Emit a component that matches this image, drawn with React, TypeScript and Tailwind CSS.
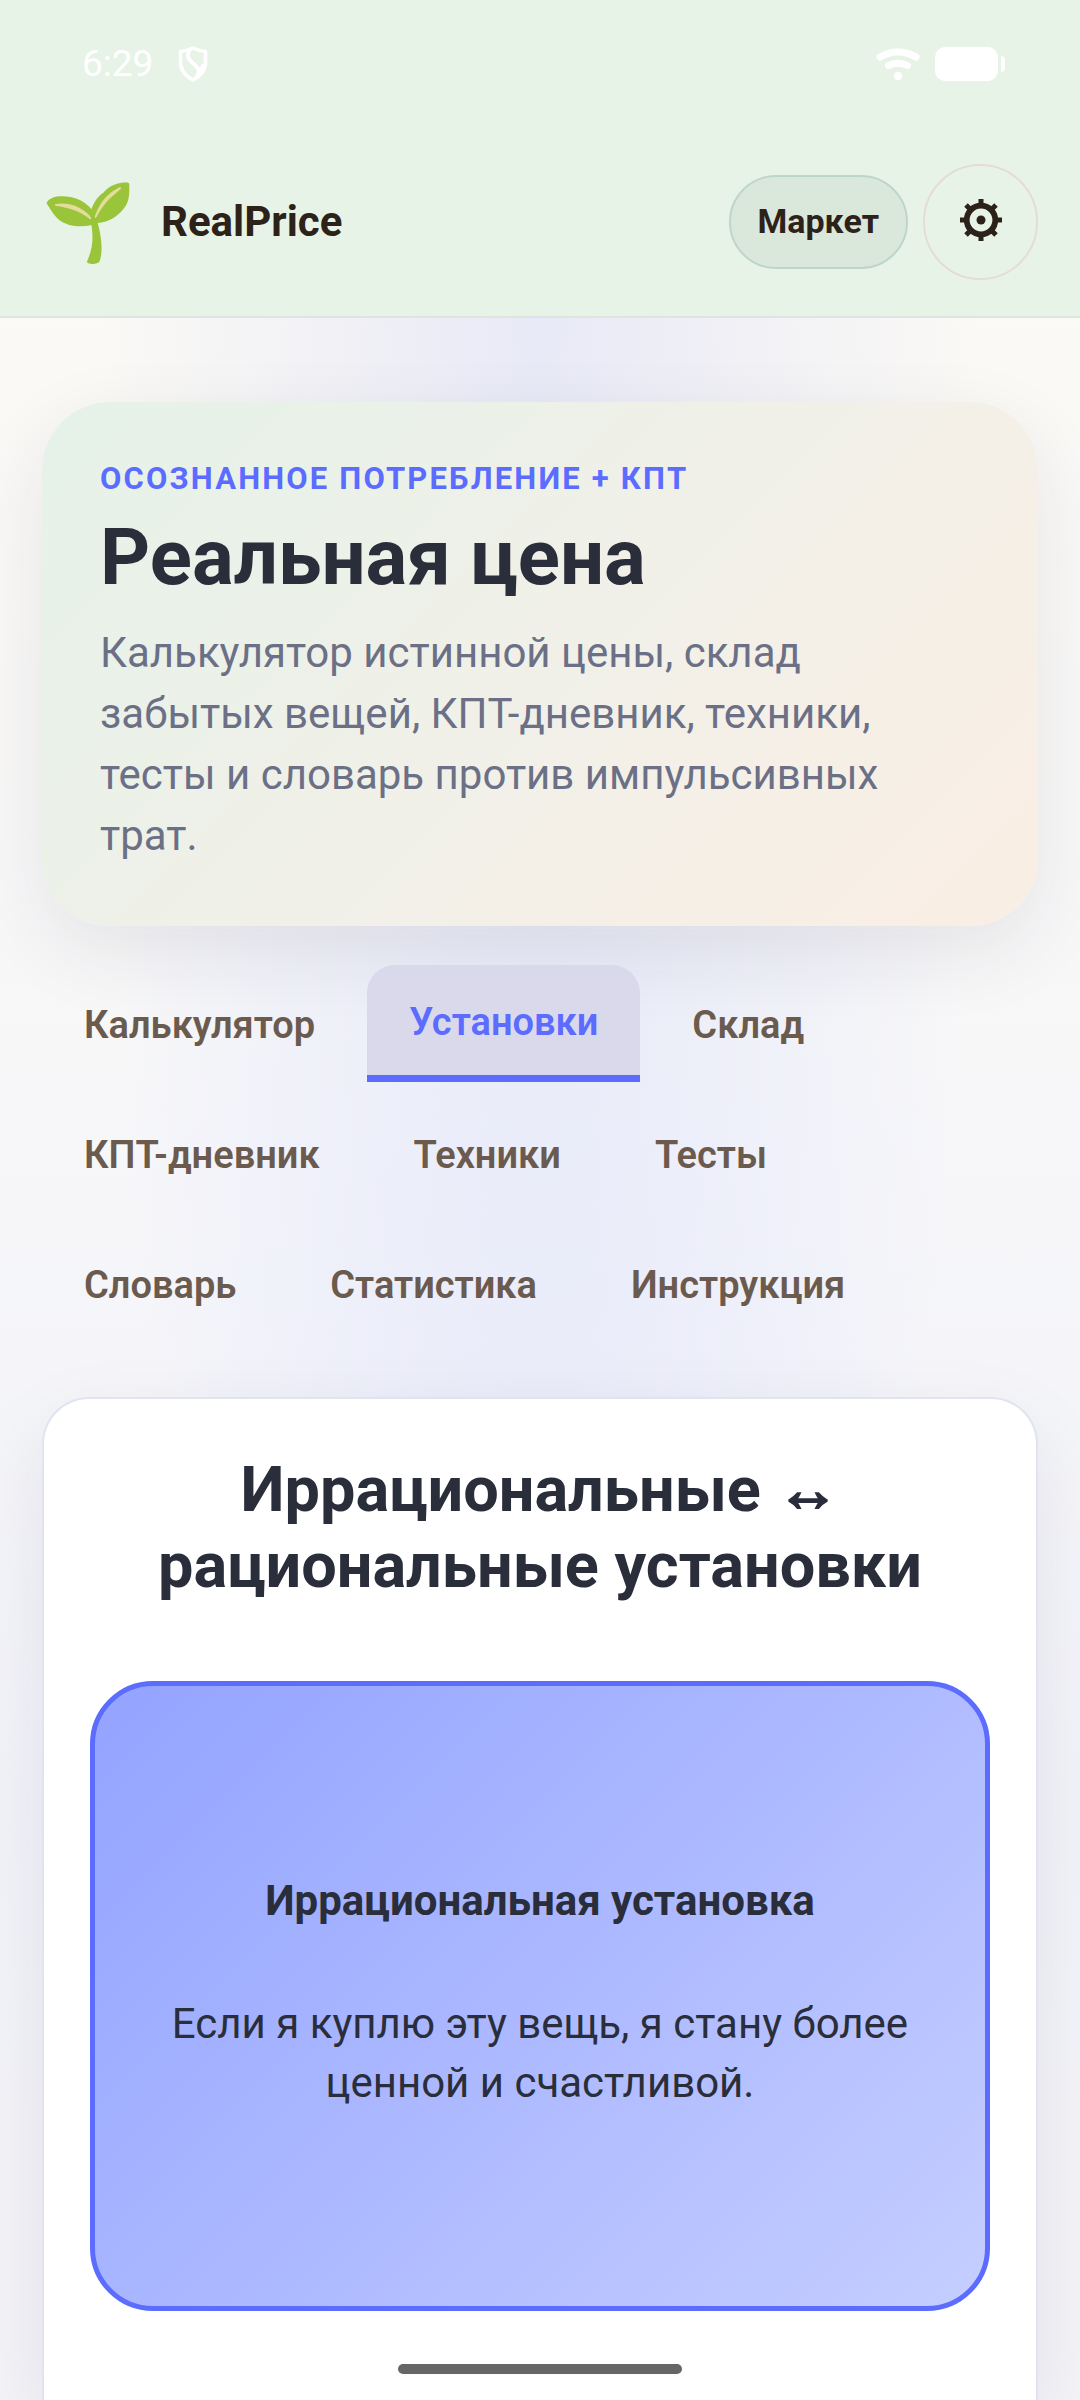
import React, { useState } from "react";

const tabs = [
  "Калькулятор",
  "Установки",
  "Склад",
  "КПТ-дневник",
  "Техники",
  "Тесты",
  "Словарь",
  "Статистика",
  "Инструкция",
];

const ShieldIcon = () => (
  <svg className="w-[30px] h-[36px]" viewBox="0 0 30 36" fill="none" stroke="currentColor" strokeWidth={3.6} strokeLinejoin="round" strokeLinecap="round">
    <path d="M15 2 C11 4 7 5 2.500 5.500 V16 C2.500 24 7.500 30 15 34 C22.500 30 27.500 24 27.500 16 V5.500 C23 5 19 4 15 2 Z" />
    <path d="M11.500 4 C8.500 9 9.500 12.500 14 16.500 C21 22 23 25 18.500 31" strokeWidth={4} />
    <path d="M25 19 L20.500 28.500" strokeWidth={3} />
  </svg>
);

const WifiIcon = () => (
  <svg className="w-[44px] h-[34px]" viewBox="0 0 44 34" fill="none" stroke="currentColor" strokeLinecap="round" strokeWidth={7}>
    <path d="M4 10 C15 3.200 29 3.200 40 10" />
    <path d="M12.500 18.500 C18 15.500 26 15.500 31.500 18.500" />
    <circle cx={22} cy={29} r={4.200} fill="currentColor" stroke="none" />
  </svg>
);

const BatteryIcon = () => (
  <svg className="w-[70px] h-[34px]" viewBox="0 0 70 34" fill="currentColor">
    <rect width={63} height={34} rx={10} />
    <path d="M66 9 C69 9.500 70 11 70 13 V21 C70 23 69 24.500 66 25 Z" />
  </svg>
);

const SproutIcon = () => (
  <svg className="w-[90px] h-[86px]" viewBox="0 -2 90 86">
    <g fill="#9ac53b">
      <path d="M1.500 22 C4 17 10 15.300 17 15.300 C31 15.300 41 21 46.300 28.300 C49 21 53 15 58.300 11.700 C65 4 73 1.500 81 1.500 C83.500 1.500 84.300 2 84.300 4 C84.500 15 84 22 78 28.500 C71 37 63 41 52.800 42 L47.300 44 C33 47 20 45 12 37 C8 33 4 26 1.500 22 Z" />
      <path d="M46.300 43 C48.500 56 48 67 42 80.500 C41.500 83.500 53 84 54.500 80.500 C58 72 57 57 52.500 41 Z" />
    </g>
    <g fill="#e3dc9a">
      <path d="M10 23.300 C23 20.500 38 26 46 36.500 C46.500 38 45.500 38.500 44.500 37.800 C33 29 23 26.500 11 25 C9.500 24.600 9.400 23.700 10 23.300 Z" />
      <path d="M74.500 6.300 C76 5.800 76.600 6.800 75.800 8 C64 18 59 22 51.500 36 C50.500 37.500 49.400 37 49.800 35.500 C54 23 62 12 74.500 6.300 Z" />
    </g>
  </svg>
);

const GearIcon = () => (
  <svg className="w-[42px] h-[46px]" viewBox="-21 -21 42 46" fill="none" stroke="currentColor" strokeWidth={5}>
    <circle r={14.300} strokeWidth={5.800} />
    <path d="M0 -21 V-15 M0 21 V15 M-21 0 H-15 M21 0 H15" />
    <path d="M-15 -15 L-11 -11 M15 -15 L11 -11 M-15 15 L-11 11 M15 15 L11 11" />
    <circle r={4.500} fill="currentColor" stroke="none" />
  </svg>
);

const App: React.FC = () => {
  const [activeTab, setActiveTab] = useState("Установки");
  const [flipped, setFlipped] = useState(false);

  return (
    <div className="min-h-screen flex flex-col font-[Roboto,sans-serif] text-[#2a2d3a] bg-[radial-gradient(ellipse_440px_2600px_at_50%_10%,rgba(91,118,255,0.12),rgba(91,118,255,0)),linear-gradient(180deg,#fdfaf4_0%,#f7f7f9_46%,#f2f3f9_75%,#f4f3f8_100%)]">
      {/* Header with status bar */}
      <header className="bg-[#e8f3e7] border-b-2 border-[#dce5e2]">
        <div className="h-[128px] pl-[82px] pr-[75px] flex items-center justify-between text-white">
          <div className="flex items-center gap-[25px]">
            <span className="text-[37px] leading-[42px]">6:29</span>
            <ShieldIcon />
          </div>
          <div className="flex items-center gap-[15px]">
            <WifiIcon />
            <BatteryIcon />
          </div>
        </div>
        <div className="h-[188px] px-[42px] flex items-center justify-between text-[#2d2219]">
          <div className="flex items-center gap-[26px] pl-[3px]">
            <SproutIcon />
            <span className="text-[42px] leading-[50px] font-bold">RealPrice</span>
          </div>
          <div className="flex items-center gap-[15px]">
            <button className="h-[94px] px-[27px] pb-[2px] rounded-full border-2 border-[#bdd6c8] bg-[#dae8dc] text-[34px] leading-[42px] font-bold">
              Маркет
            </button>
            <button aria-label="Настройки" className="w-[115px] h-[116px] rounded-full border-2 border-[#e4dcd6] flex items-center justify-center">
              <GearIcon />
            </button>
          </div>
        </div>
      </header>

      <main className="flex-1 flex flex-col px-[42px] pt-[84px]">
        {/* Hero */}
        <section className="rounded-[68px] px-[58px] py-[60px] bg-[linear-gradient(135deg,#e5f2e9_0%,#f3f0e8_60%,#faeee4_100%)] shadow-[0_26px_80px_rgba(30,30,40,0.09)]">
          <p className="text-[31px] leading-[34px] font-bold tracking-[0.07em] uppercase text-[#5b6cff]">
            Осознанное потребление + КПТ
          </p>
          <h1 className="mt-[17px] text-[78px] leading-[90px] font-bold">Реальная цена</h1>
          <p className="mt-[19px] text-[42px] leading-[61px] text-[#6b7086]">
            Калькулятор истинной цены, склад забытых вещей, КПТ-дневник, техники, тесты и словарь против импульсивных трат.
          </p>
        </section>

        {/* Tab navigation */}
        <nav className="mt-[39px] flex flex-wrap items-start gap-x-[10px] gap-y-[11px]">
          {tabs.map((tab) => (
            <button
              key={tab}
              onClick={() => setActiveTab(tab)}
              className={`px-[42px] text-[38px] leading-[44px] font-semibold ${
                activeTab === tab
                  ? "h-[117px] pt-[4px] rounded-t-[28px] border-b-7 border-[#5b6cff] bg-[#dad9ec] text-[#5b6cff]"
                  : "h-[119px] text-[#6b5b4e]"
              }`}
            >
              {tab}
            </button>
          ))}
        </nav>

        {/* Beliefs card */}
        <section className="mt-[53px] flex-1 rounded-t-[47px] border-2 border-b-0 border-[#e1e4f0] bg-white px-[46px] pt-[53px] pb-[89px] shadow-[0_26px_80px_rgba(30,30,40,0.08)]">
          <h2 className="text-center text-[63px] leading-[76px] font-bold">
            Иррациональные <span className="[-webkit-text-stroke:2px_#2a2d3a]">↔</span> рациональные установки
          </h2>
          <button
            onClick={() => setFlipped(!flipped)}
            className="mt-[77px] w-full h-[630px] rounded-[63px] border-5 border-[#5b6cff] bg-[linear-gradient(135deg,#93a3ff,#c5ceff)] px-[58px] pb-[9px] flex flex-col items-center justify-center gap-[64px] text-[42px] leading-[59px]"
          >
            <strong className="font-bold">{flipped ? "Рациональная установка" : "Иррациональная установка"}</strong>
            <span>
              {flipped
                ? "Моя ценность не зависит от покупок."
                : "Если я куплю эту вещь, я стану более ценной и счастливой."}
            </span>
          </button>
        </section>
      </main>

      {/* Gesture bar */}
      <div className="fixed bottom-[26px] left-1/2 -translate-x-1/2 w-[284px] h-[10px] rounded-full bg-[#666]" />
    </div>
  );
};

export default App;
